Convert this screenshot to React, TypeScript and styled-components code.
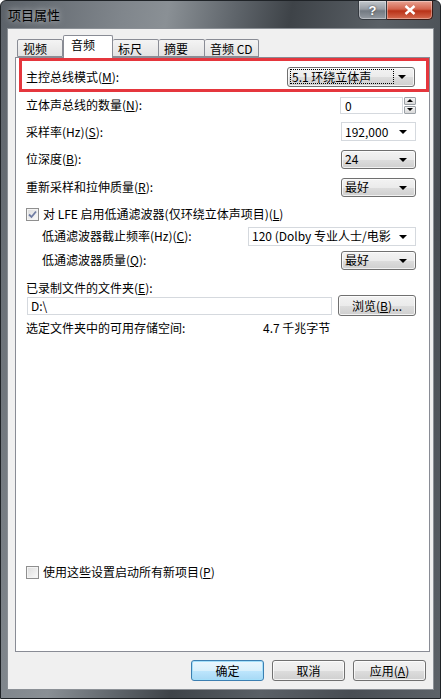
import React from "react";
import styled, { createGlobalStyle } from "styled-components";

const Global = createGlobalStyle`
  html, body { margin: 0; padding: 0; background: #ffffff; }
  body {
    font-family: "Noto Sans CJK SC", "Liberation Sans", sans-serif;
    font-size: 12px;
    color: #000;
  }
  * { box-sizing: border-box; }
`;

const Frame = styled.div`
  width: 441px;
  height: 699px;
  display: flex;
  flex-direction: column;
  padding: 0 6px 8px 6px;
  border: 1px solid #1f2327;
  border-radius: 6px 6px 0 0;
  background: linear-gradient(
    100deg,
    #5b6168 0%,
    #80868c 22%,
    #8a9095 30%,
    #5f656b 42%,
    #3e4348 52%,
    #5a6066 68%,
    #484d53 84%,
    #5c6268 100%
  );
`;

const TitleBar = styled.div`
  height: 27px;
  display: flex;
  justify-content: space-between;
  align-items: flex-start;
`;

const Title = styled.div`
  padding: 6px 0 0 1px;
  font-size: 13px;
  line-height: 15px;
  color: #000;
  text-shadow: 0 0 6px rgba(255, 255, 255, 0.7);
`;

const Caption = styled.div`
  display: flex;
  margin-right: 1px;
`;

const CapButton = styled.div<{ $close?: boolean }>`
  width: ${(p) => (p.$close ? 46 : 29)}px;
  height: 19px;
  display: flex;
  align-items: center;
  justify-content: center;
  color: #fff;
  font-family: "Liberation Sans", sans-serif;
  font-weight: bold;
  font-size: 13px;
  border: 1px solid ${(p) => (p.$close ? "#3b1a14" : "#353a40")};
  border-top: none;
  border-left: ${(p) => (p.$close ? "none" : "1px solid #353a40")};
  border-radius: ${(p) => (p.$close ? "0 0 5px 0" : "0 0 0 5px")};
  box-shadow: inset 0 0 0 1px rgba(255, 255, 255, 0.35);
  background: ${(p) =>
    p.$close
      ? "linear-gradient(#e8a393 0%, #d3644d 45%, #b93218 55%, #d56a4f 100%)"
      : "linear-gradient(#c3c8cd 0%, #979da4 45%, #737a82 55%, #959ba2 100%)"};
  text-shadow: 0 0 2px #333;
`;

const Client = styled.div`
  flex: 1;
  display: flex;
  flex-direction: column;
  background: #f0f0f0;
  border: 1px solid #8b9096;
  padding: 6px 3px 4px 7px;
`;

const TabStrip = styled.div`
  height: 22px;
  display: flex;
  align-items: flex-end;
  padding-left: 2px;
  position: relative;
  z-index: 1;
`;

const Tab = styled.div<{ $active?: boolean }>`
  min-width: ${(p) => (p.$active ? 50 : 46)}px;
  height: ${(p) => (p.$active ? 23 : 18)}px;
  margin-bottom: ${(p) => (p.$active ? -1 : 0)}px;
  padding: ${(p) => (p.$active ? "2px 7px 0" : "2px 5px 0")};
  border: 1px solid #898c95;
  border-bottom: ${(p) => (p.$active ? "none" : "1px solid #898c95")};
  border-left: ${(p) => (p.$active ? "1px solid #898c95" : "none")};
  border-radius: 2px 2px 0 0;
  background: ${(p) => (p.$active ? "#ffffff" : "linear-gradient(#f4f4f4, #e3e3e3)")};
  font-size: 12px;
  line-height: 14px;
  white-space: nowrap;
  &:first-child {
    border-left: 1px solid #898c95;
  }
`;

const Panel = styled.div`
  flex: 1;
  display: flex;
  flex-direction: column;
  background: #ffffff;
  border: 1px solid #898c95;
`;

const Highlight = styled.div`
  height: 34px;
  margin-left: 3px;
  border: 3px solid #e5363d;
  padding: 3px 11px 0 4px;
  display: flex;
  align-items: center;
  justify-content: space-between;
`;

const Body = styled.div`
  flex: 1;
  display: flex;
  flex-direction: column;
  padding: 0 13px 69px 10px;
`;

const Row = styled.div<{ $h: number; $indent?: number }>`
  height: ${(p) => p.$h}px;
  display: flex;
  align-items: center;
  justify-content: space-between;
  padding-left: ${(p) => p.$indent ?? 0}px;
`;

const Label = styled.span`
  line-height: 14px;
  white-space: nowrap;
`;

const U = styled.span`
  text-decoration: underline;
`;

const Arrow = styled.span`
  width: 0;
  height: 0;
  border-left: 4px solid transparent;
  border-right: 4px solid transparent;
  border-top: 4px solid #000;
  margin-top: 1px;
`;

const Combo = styled.div<{ $w: number; $h?: number; $edit?: boolean }>`
  width: ${(p) => p.$w}px;
  height: ${(p) => p.$h ?? 19}px;
  display: flex;
  align-items: center;
  justify-content: space-between;
  padding: 0 8px 0 3px;
  border: 1px solid ${(p) => (p.$edit ? "#d5d9de" : "#707070")};
  border-radius: ${(p) => (p.$edit ? 0 : 3)}px;
  background: ${(p) =>
    p.$edit
      ? "#ffffff"
      : "linear-gradient(#f3f3f3 0%, #ebebeb 50%, #dddddd 51%, #cfcfcf 100%)"};
  box-shadow: ${(p) => (p.$edit ? "none" : "inset 0 0 0 1px rgba(255,255,255,0.7)")};
  line-height: 14px;
  white-space: nowrap;
  overflow: hidden;
`;

const Focus = styled.span`
  outline: 1px dotted #000;
  padding: 0 22px 0 1px;
  line-height: 13px;
`;

const Spin = styled.div`
  width: 76px;
  height: 17px;
  display: flex;
`;

const SpinText = styled.div`
  flex: 1;
  border: 1px solid #d5d9de;
  padding: 0 4px;
  line-height: 15px;
  background: #fff;
`;

const SpinButtons = styled.div`
  width: 12px;
  margin-left: 1px;
  display: flex;
  flex-direction: column;
  gap: 1px;
`;

const SpinBtn = styled.div<{ $up?: boolean }>`
  flex: 1;
  display: flex;
  align-items: center;
  justify-content: center;
  border: 1px solid #9aa0a6;
  border-radius: 1px;
  background: linear-gradient(#f6f6f6, #d8d8d8);
  &::after {
    content: "";
    border-left: 3px solid transparent;
    border-right: 3px solid transparent;
    ${(p) => (p.$up ? "border-bottom: 3px solid #000;" : "border-top: 3px solid #000;")}
  }
`;

const Box = styled.span`
  width: 13px;
  height: 13px;
  border: 1px solid #8f8f8f;
  background: linear-gradient(135deg, #dcdcdc, #fbfbfb);
  box-shadow: inset 0 0 0 1px #f4f4f4;
  display: inline-flex;
  align-items: center;
  justify-content: center;
  margin-right: 4px;
  flex: none;
`;

const CheckLine = styled.label`
  display: flex;
  align-items: center;
  line-height: 14px;
`;

const LabelLine = styled.div`
  height: 20px;
  padding-top: 6px;
  line-height: 14px;
`;

const TextInput = styled.div`
  width: 305px;
  height: 18px;
  border: 1px solid #d5d9de;
  padding: 0 3px;
  line-height: 16px;
  background: #fff;
  margin-left: 1px;
`;

const PushButton = styled.div<{ $w: number; $default?: boolean }>`
  width: ${(p) => p.$w}px;
  height: 21px;
  display: flex;
  align-items: center;
  justify-content: center;
  border: 1px solid ${(p) => (p.$default ? "#3c7fb1" : "#707070")};
  border-radius: 3px;
  background: ${(p) =>
    p.$default
      ? "linear-gradient(#eaf6fd 0%, #d9f0fc 50%, #bee6fd 51%, #a7d9f5 100%)"
      : "linear-gradient(#f2f2f2 0%, #ebebeb 50%, #dddddd 51%, #cfcfcf 100%)"};
  box-shadow: inset 0 0 0 1px ${(p) => (p.$default ? "#a4dffa" : "rgba(255,255,255,0.75)")};
  line-height: 14px;
  white-space: nowrap;
`;

const FreeRow = styled.div`
  height: 24px;
  display: grid;
  grid-template-columns: 237px 1fr;
  align-items: center;
  line-height: 14px;
`;

const Spacer = styled.div`
  flex: 1;
`;

const ButtonBar = styled.div`
  height: 33px;
  display: flex;
  justify-content: flex-end;
  align-items: flex-start;
  gap: 8px;
  padding: 8px 4px 0 0;
`;

const Check = ({ on }: { on?: boolean }) => (
  <Box>
    {on && (
      <svg width="9" height="9" viewBox="0 0 9 9">
        <path d="M1 4.5 L3.5 7 L8 1.5" fill="none" stroke="#6f7ca3" strokeWidth="1.8" />
      </svg>
    )}
  </Box>
);

export default function App() {
  return (
    <>
      <Global />
      <Frame>
        <TitleBar>
          <Title>项目属性</Title>
          <Caption>
            <CapButton>?</CapButton>
            <CapButton $close>
              <svg width="12" height="10" viewBox="0 0 12 10">
                <path d="M1.5 1 L10.5 9 M10.5 1 L1.5 9" stroke="#fff" strokeWidth="2.4" />
              </svg>
            </CapButton>
          </Caption>
        </TitleBar>
        <Client>
          <TabStrip>
            <Tab>视频</Tab>
            <Tab $active>音频</Tab>
            <Tab>标尺</Tab>
            <Tab>摘要</Tab>
            <Tab>音频 CD</Tab>
          </TabStrip>
          <Panel>
            <Highlight>
              <Label>
                主控总线模式(<U>M</U>):
              </Label>
              <Combo $w={128} $h={20}>
                <Focus>5.1 环绕立体声</Focus>
                <Arrow />
              </Combo>
            </Highlight>
            <Body>
              <Row $h={26}>
                <Label>
                  立体声总线的数量(<U>N</U>):
                </Label>
                <Spin>
                  <SpinText>0</SpinText>
                  <SpinButtons>
                    <SpinBtn $up />
                    <SpinBtn />
                  </SpinButtons>
                </Spin>
              </Row>
              <Row $h={27}>
                <Label>
                  采样率(Hz)(<U>S</U>):
                </Label>
                <Combo $w={75} $edit>
                  <span>192,000</span>
                  <Arrow />
                </Combo>
              </Row>
              <Row $h={28}>
                <Label>
                  位深度(<U>B</U>):
                </Label>
                <Combo $w={75}>
                  <span>24</span>
                  <Arrow />
                </Combo>
              </Row>
              <Row $h={28}>
                <Label>
                  重新采样和拉伸质量(<U>R</U>):
                </Label>
                <Combo $w={75}>
                  <span>最好</span>
                  <Arrow />
                </Combo>
              </Row>
              <Row $h={26}>
                <CheckLine>
                  <Check on />
                  对 LFE 启用低通滤波器(仅环绕立体声项目)(<U>L</U>)
                </CheckLine>
              </Row>
              <Row $h={18} $indent={16}>
                <Label>
                  低通滤波器截止频率(Hz)(<U>C</U>):
                </Label>
                <Combo $w={168} $edit>
                  <span>120 (Dolby 专业人士/电影</span>
                  <Arrow />
                </Combo>
              </Row>
              <Row $h={30} $indent={16}>
                <Label>
                  低通滤波器质量(<U>Q</U>):
                </Label>
                <Combo $w={75}>
                  <span>最好</span>
                  <Arrow />
                </Combo>
              </Row>
              <LabelLine>
                已录制文件的文件夹(<U>E</U>):
              </LabelLine>
              <Row $h={21}>
                <TextInput>D:\</TextInput>
                <PushButton $w={78}>
                  浏览(<U>B</U>)...
                </PushButton>
              </Row>
              <FreeRow>
                <span>选定文件夹中的可用存储空间:</span>
                <span>4.7 千兆字节</span>
              </FreeRow>
              <Spacer />
              <Row $h={20}>
                <CheckLine>
                  <Check />
                  使用这些设置启动所有新项目(<U>P</U>)
                </CheckLine>
              </Row>
            </Body>
          </Panel>
          <ButtonBar>
            <PushButton $w={73} $default>
              确定
            </PushButton>
            <PushButton $w={73}>取消</PushButton>
            <PushButton $w={73}>
              应用(<U>A</U>)
            </PushButton>
          </ButtonBar>
        </Client>
      </Frame>
    </>
  );
}
